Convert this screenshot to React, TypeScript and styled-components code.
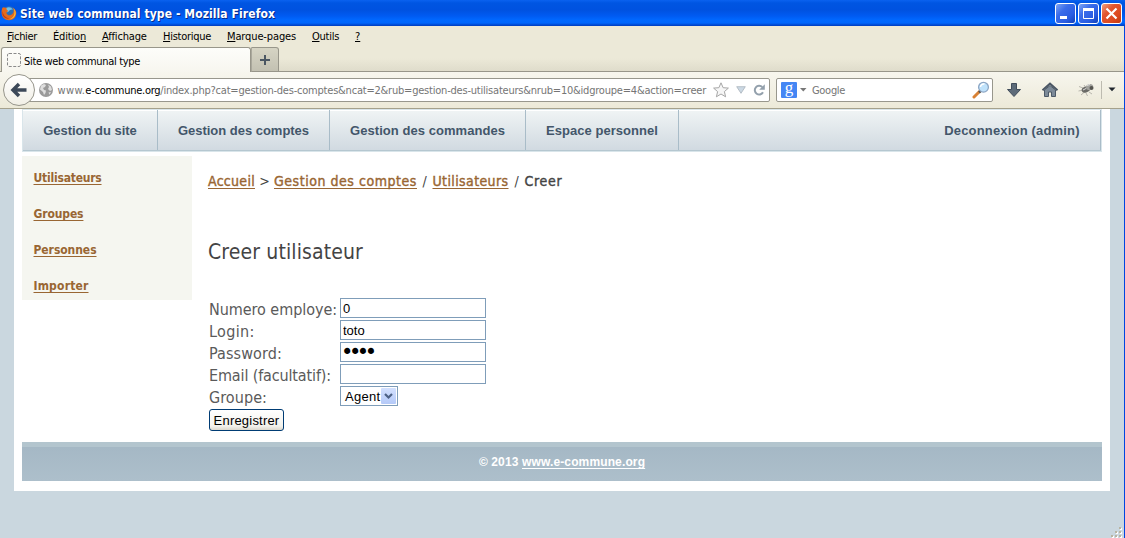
import React from 'react';
import styled, { createGlobalStyle } from 'styled-components';

const ui = '"DejaVu Sans Condensed", "DejaVu Sans", sans-serif';
const arial = '"Liberation Sans", Arial, sans-serif';

const GlobalStyle = createGlobalStyle`
  * { box-sizing: border-box; }
  body { margin: 0; overflow: hidden; font-family: ${ui}; }
  svg { display: block; flex: none; }
`;

const Window = styled.div`
  width: 1125px;
  height: 538px;
  display: flex;
  flex-direction: column;
`;

const TitleBar = styled.header`
  height: 26px;
  flex: none;
  display: flex;
  align-items: center;
  padding: 0 2px 0 1px;
  background: linear-gradient(#0a62f0 0, #0055e2 3px, #0052e0 10px, #005bf2 16px, #0068ff 20px, #0066fc 23px, #0048cf 25px, #003dc0 26px);
`;

const WindowTitle = styled.h1`
  flex: 1;
  margin: 0 0 0 3px;
  padding-top: 1px;
  font: bold 12px/26px ${ui};
  letter-spacing: 0.086px;
  color: #fff;
  text-shadow: 1px 1px 0 #0a2a86;
  white-space: nowrap;
`;

const WindowButtons = styled.div`
  display: flex;
  gap: 2px;
  margin-right: 1px;
`;

const WindowButton = styled.span<{ $close?: boolean }>`
  width: 21px;
  height: 21px;
  border: 1px solid #fff;
  border-radius: 3px;
  background: ${(p) =>
    p.$close
      ? 'linear-gradient(135deg, #f0a080 0%, #e2552f 35%, #dc4a20 70%, #c03a10 100%)'
      : 'linear-gradient(135deg, #7ea4f4 0%, #3a6cea 35%, #2a5de2 70%, #1040b8 100%)'};
`;

const Body = styled.div`
  flex: 1;
  display: flex;
  flex-direction: column;
  border-right: 1px solid #0046e0;
  background: #ece9d8;
  min-height: 0;
`;

const MenuBar = styled.nav`
  display: flex;
  height: 21px;
  flex: none;
  padding-left: 7px;
  font: 11px/21px ${ui};
  color: #000;
`;

const MenuItem = styled.span<{ $width: number; $spacing: number }>`
  width: ${(p) => p.$width}px;
  letter-spacing: ${(p) => p.$spacing}px;
  white-space: nowrap;
  u { text-underline-offset: 1px; }
`;

const TabStrip = styled.div`
  display: flex;
  height: 25px;
  flex: none;
  background: linear-gradient(#ece9d8 45%, #dfdccb 24px);
`;

const StripEdge = styled.div<{ $grow?: boolean }>`
  width: 1px;
  flex: ${(p) => (p.$grow ? '1' : 'none')};
  border-bottom: 1px solid #98968a;
`;

const Tab = styled.div`
  width: 250px;
  display: flex;
  align-items: center;
  gap: 3px;
  border: 1px solid #98968a;
  border-bottom: 0;
  border-radius: 3px 3px 0 0;
  padding-left: 5px;
  background: linear-gradient(#fdfdfa, #f7f6ef);
  font: 11px/14px ${ui};
  letter-spacing: -0.325px;
  color: #000;
`;

const TabLabel = styled.span`
  padding-top: 3px;
`;

const NewTab = styled.div`
  width: 28px;
  display: flex;
  justify-content: center;
  padding-top: 6px;
  border: 1px solid #98968a;
  border-left-color: #aaa89c;
  border-radius: 0 3px 0 0;
  background: linear-gradient(#d6d4c4, #c3c1b2);
`;

const ToolBar = styled.div`
  height: 37px;
  flex: none;
  display: flex;
  align-items: center;
  padding: 0 0 1px 3px;
  border-bottom: 1px solid #a5a18c;
  background: linear-gradient(#f7f6ee, #ece9d8);
`;

const BackButton = styled.span`
  position: relative;
  width: 32px;
  height: 32px;
  margin-right: -16px;
  flex: none;
  display: flex;
  align-items: center;
  justify-content: center;
  border: 1px solid #96958b;
  border-radius: 50%;
  background: linear-gradient(#fff, #f1efe6);
`;

const Field = styled.div`
  height: 24px;
  flex: none;
  display: flex;
  align-items: center;
  border: 1px solid #98978d;
  border-radius: 2px;
  background: #fff;
  font: 11px/20px ${ui};
  color: #757575;
  white-space: nowrap;
`;

const AddressField = styled(Field)`
  width: 751px;
  padding-left: 19px;
`;

const SearchField = styled(Field)`
  width: 217px;
  margin-left: 6px;
  padding: 0 2px 0 4px;
`;

const UrlText = styled.span`
  width: 655px;
  margin-left: 4.500px;
  padding-top: 2px;
  display: flex;
`;

const UrlPart = styled.span<{ $spacing: number; $strong?: boolean }>`
  letter-spacing: ${(p) => p.$spacing}px;
  color: ${(p) => (p.$strong ? '#000' : '#757575')};
`;

const UrlIcons = styled.span`
  display: flex;
  align-items: center;
  gap: 7px;
`;

const Engine = styled.span`
  width: 16px;
  height: 16px;
  border-radius: 1px;
  background: #4486f4;
  color: #fff;
  font: 17px/12px "Liberation Serif", serif;
  text-align: center;
`;

const SearchHint = styled.span`
  flex: 1;
  margin-left: 1px;
  padding-top: 2px;
  letter-spacing: -0.3px;
`;

const Tools = styled.div`
  display: flex;
  align-items: center;
  margin-left: 13px;
`;

const ToolDivider = styled.span`
  width: 1px;
  height: 18px;
  margin: 0 6px 0 6px;
  background: #bdbbb0;
`;

const Viewport = styled.main`
  position: relative;
  flex: 1;
  padding: 0 14px;
  background: #cad7df;
`;

const Page = styled.div`
  width: 1096px;
  height: 382px;
  display: flex;
  flex-direction: column;
  padding: 0 8px 10px;
  background: #fff;
`;

const SiteNav = styled.nav`
  height: 43px;
  flex: none;
  display: flex;
  border: 1px solid #d9e5ea;
  box-shadow: inset 0 -1px 0 #b5c7d0, inset -1px 0 0 #a9bcc8, inset 0 1px 0 #fff;
  background: linear-gradient(#f0f4f5, #d0d9e0);
  font: bold 13px/42px ${arial};
  color: #43566a;
`;

const SiteNavItem = styled.a<{ $width: number; $spacing?: number; $end?: boolean }>`
  width: ${(p) => p.$width}px;
  margin-bottom: 1px;
  margin-left: ${(p) => (p.$end ? 'auto' : '0')};
  border-right: 1px solid ${(p) => (p.$end ? 'transparent' : '#a9bcc8')};
  letter-spacing: ${(p) => p.$spacing ?? 0}px;
  text-align: center;
  white-space: nowrap;
`;

const Columns = styled.div`
  display: flex;
  gap: 16px;
  height: 290px;
  padding-top: 4px;
`;

const SideMenu = styled.aside`
  width: 170px;
  height: 144px;
  display: flex;
  flex-direction: column;
  gap: 18px;
  align-items: flex-start;
  padding: 13px 0 0 11.500px;
  background: #f5f6f0;
`;

const Link = styled.a<{ $spacing: number }>`
  color: #996633;
  text-decoration: underline;
  text-underline-offset: 2px;
  text-decoration-thickness: 1px;
  text-decoration-skip-ink: none;
  letter-spacing: ${(p) => p.$spacing}px;
`;

const SideLink = styled(Link)`
  font: bold 12px/18px ${ui};
`;

const Content = styled.section`
  color: #444;
`;

const Breadcrumb = styled.div`
  display: flex;
  gap: 4px;
  margin-top: 15px;
  font: 14px/20px ${ui};
`;

const Crumb = styled(Link)`
  -webkit-text-stroke: 0.4px #996633;
`;

const Separator = styled.span<{ $width: number }>`
  width: ${(p) => p.$width}px;
  text-align: center;
`;

const CurrentCrumb = styled.span`
  letter-spacing: 0.7px;
  -webkit-text-stroke: 0.4px #444;
`;

const Heading = styled.h2`
  margin: 47px 0 0;
  font: 21px/28px ${ui};
  letter-spacing: 0.127px;
`;

const Form = styled.form`
  margin: 32px 0 0 1px;
  display: flex;
  flex-direction: column;
  align-items: flex-start;
`;

const FormRow = styled.label`
  height: 22px;
  display: flex;
`;

const Label = styled.span<{ $spacing: number }>`
  width: 131px;
  font: 16px/24px ${ui};
  letter-spacing: ${(p) => p.$spacing}px;
  color: #5a5a5a;
  white-space: nowrap;
`;

const Input = styled.input`
  width: 146px;
  height: 20px;
  padding: 0 2px;
  border: 1px solid #7f9db9;
  border-radius: 0;
  background: #fff;
  font: 13px/18px ${arial};
  color: #000;
  outline: 0;
  &[type='password'] {
    padding-left: 0;
    font: 21px/18px "DejaVu Sans", sans-serif;
    letter-spacing: -4.500px;
  }
`;

const Select = styled.span`
  width: 58px;
  height: 20px;
  display: flex;
  justify-content: space-between;
  padding: 1px 1px 1px 4px;
  border: 1px solid #7f9db9;
  background: #fff;
  font: 13px/17px ${arial};
  letter-spacing: 0.3px;
  color: #000;
`;

const SelectArrow = styled.span`
  width: 15px;
  display: flex;
  align-items: center;
  justify-content: center;
  border-radius: 1px;
  background: linear-gradient(#d3e0fe, #b4c9f8);
`;

const Submit = styled.button`
  width: 75px;
  height: 22px;
  margin-top: 1px;
  padding: 0;
  border: 1px solid #003c74;
  border-radius: 3px;
  background: linear-gradient(#fff, #f3f2ec 80%, #dcd8cc);
  font: 13px/19px ${arial};
  letter-spacing: 0.2px;
  color: #000;
`;

const Footer = styled.footer`
  height: 39px;
  flex: none;
  border-top: 5px solid #b3c5ce;
  background: linear-gradient(#a5b8c5, #adbfcb);
  font: bold 12px/30px ${arial};
  color: #fff;
  text-align: center;
  letter-spacing: 0.13px;
`;

const FooterLink = styled.a`
  color: #fff;
  text-decoration: underline;
  text-underline-offset: 2px;
  text-decoration-skip-ink: none;
`;

const Grip = styled.svg`
  position: absolute;
  right: 0;
  bottom: 0;
`;

const FirefoxIcon = () => (
  <svg width="16" height="16" viewBox="0 0 16 16">
    <circle cx="8" cy="7.6" r="6.4" fill="#2c6fb8" />
    <path d="M5 3a5.500 5.500 0 0 1 7 1.500q-3-.5-4 1.500-1 2-3 1z" fill="#6fc0ea" />
    <path d="M1.200 3.200Q2 1.500 3 2.500q1.500-.3 2.600.8Q4.800 4.700 7 5.800 6.800 7 5.300 7.400 6 10.500 9 10.200q2.800-.4 3.600-3.600.3-2.300-.8-4.200Q15.800 5 15.200 9q-1 6-7.200 6.300Q1.300 15 .6 8.500.4 5.300 1.200 3.200z" fill="#e66a1c" />
    <path d="M12.500 3.200q3 3.300 1.800 6.800-1.500 4-5.800 4.300 4.800-1.800 5-6.300.1-2.600-1-4.800z" fill="#f9c53a" />
    <path d="M1.500 6q.8 6 6.500 7.600Q3 14 1.500 9.500z" fill="#b93a17" />
  </svg>
);

const sites = [
  { text: 'Gestion du site', width: 135, spacing: -0.02 },
  { text: 'Gestion des comptes', width: 172, spacing: -0.02 },
  { text: 'Gestion des commandes', width: 196, spacing: 0.05 },
  { text: 'Espace personnel', width: 153, spacing: 0.05 },
];

const sideLinks = [
  ['Utilisateurs', -0.22],
  ['Groupes', -0.12],
  ['Personnes', -0.06],
  ['Importer', 0.18],
] as const;

export default function App() {
  return (
    <Window>
      <GlobalStyle />
      <TitleBar>
        <FirefoxIcon />
        <WindowTitle>Site web communal type - Mozilla Firefox</WindowTitle>
        <WindowButtons>
          <WindowButton>
            <svg width="19" height="19"><rect x="4" y="12" width="7" height="3" fill="#fff" /></svg>
          </WindowButton>
          <WindowButton>
            <svg width="19" height="19">
              <path d="M4.500 5v9.500h10V5" fill="none" stroke="#fff" />
              <path d="M4 4h11v3H4z" fill="#fff" />
            </svg>
          </WindowButton>
          <WindowButton $close>
            <svg width="19" height="19"><path d="M4.500 4.500l10 10m0-10l-10 10" stroke="#fff" strokeWidth="2.200" /></svg>
          </WindowButton>
        </WindowButtons>
      </TitleBar>
      <Body>
        <MenuBar>
          <MenuItem $width={46} $spacing={-0.32}><u>F</u>ichier</MenuItem>
          <MenuItem $width={49} $spacing={-0.18}>Éditio<u>n</u></MenuItem>
          <MenuItem $width={61} $spacing={-0.17}><u>A</u>ffichage</MenuItem>
          <MenuItem $width={64} $spacing={-0.27}><u>H</u>istorique</MenuItem>
          <MenuItem $width={85} $spacing={-0.13}><u>M</u>arque-pages</MenuItem>
          <MenuItem $width={43} $spacing={-0.26}><u>O</u>utils</MenuItem>
          <MenuItem $width={10} $spacing={0}><u>?</u></MenuItem>
        </MenuBar>
        <TabStrip>
          <StripEdge />
          <Tab>
            <svg width="14" height="14">
              <rect x=".5" y=".5" width="13" height="13" rx="1.500" fill="none" stroke="#8a8a8a" strokeDasharray="3 1.500" />
            </svg>
            <TabLabel>Site web communal type</TabLabel>
          </Tab>
          <NewTab>
            <svg width="12" height="12"><path d="M6 1v10M1 6h10" stroke="#4b5763" strokeWidth="2" /></svg>
          </NewTab>
          <StripEdge $grow />
        </TabStrip>
        <ToolBar>
          <BackButton>
            <svg width="18" height="16" viewBox="0 0 18 16">
              <path d="M9 2L3 8l6 6M3.500 8h13" fill="none" stroke="#3c4858" strokeWidth="3.500" />
            </svg>
          </BackButton>
          <AddressField>
            <svg width="14" height="14" viewBox="0 0 14 14">
              <circle cx="7" cy="7" r="7" fill="#9a9a9a" />
              <path d="M2 2.500l3-1.500 2 1-1 2-2 1 1 2 2 .5-.5 2.500L5 12 4 9 1 6.500zM9 1.500l3 2 1 3.500-2 1-2-2 1-2zM9.500 9.500l2.500-.5-1.500 2.800z" fill="#dedede" />
            </svg>
            <UrlText>
              <UrlPart $spacing={0.35}>www.</UrlPart>
              <UrlPart $spacing={-0.264} $strong>e-commune.org</UrlPart>
              <UrlPart $spacing={-0.213}>/index.php?cat=gestion-des-comptes&amp;ncat=2&amp;rub=gestion-des-utilisateurs&amp;nrub=10&amp;idgroupe=4&amp;action=creer</UrlPart>
            </UrlText>
            <UrlIcons>
              <svg width="16" height="16" viewBox="0 0 16 16">
                <path d="M8 .8l2.100 4.900 5.300.4-4 3.500 1.200 5.200L8 12l-4.600 2.800 1.200-5.200-4-3.500 5.300-.4z" fill="#f6f6f6" stroke="#a6a6a6" />
              </svg>
              <svg width="10" height="8" viewBox="0 0 10 8">
                <path d="M.7.7h8.600L5 7.300z" fill="#ccd9e4" stroke="#a9b3bb" strokeWidth=".8" />
              </svg>
              <svg width="12" height="12" viewBox="1.500 0 12 12">
                <path d="M9.300 3A4.400 4.400 0 1 0 10 8.300" fill="none" stroke="#93a0ac" strokeWidth="2" transform="translate(1.500 0)" />
                <path d="M13.300.3v5.500H7.700z" fill="#93a0ac" />
              </svg>
            </UrlIcons>
          </AddressField>
          <SearchField>
            <Engine>g</Engine>
            <svg width="14" height="6" viewBox="0 0 14 6"><path d="M3 1h6.500L6.300 4.500z" fill="#777" /></svg>
            <SearchHint>Google</SearchHint>
            <svg width="18" height="18" viewBox="0 0 18 18">
              <path d="M8 10L2 16" stroke="#d98235" strokeWidth="3" strokeLinecap="round" />
              <path d="M9 9.500L7 11.500" stroke="#555" strokeWidth="2.500" />
              <circle cx="11.500" cy="6.200" r="4.900" fill="#bfe2fb" stroke="#8da6c4" strokeWidth="1.300" />
              <path d="M8.500 6a3.200 3.200 0 0 1 4-3" stroke="#fff" strokeWidth="1.500" fill="none" />
            </svg>
          </SearchField>
          <Tools>
            <svg width="16" height="16" viewBox="0 0 16 16">
              <path d="M5.500 1.500h5v6h4L8 14.500 1.500 7.500h4z" fill="#5d6b79" stroke="#414d5b" />
            </svg>
            <svg width="56" height="16" viewBox="-1 0 56 16">
              <path d="M21.500 8v6.500h4V10h3v4.500h4V8L27 3.500z" fill="#7c8a98" stroke="#4c5967" />
              <path d="M19.500 8.300L27 1.600l7.500 6.700" fill="none" stroke="#4a5664" strokeWidth="2" />
            </svg>
            <svg width="17" height="14" viewBox="0 0 17 14">
              <path d="M1 3.500l4 1.500M.5 8l5-1M3 12l3.500-3M8 10l1.500 3M11 9l3 2M6 2l2 3" stroke="#b8b6ad" />
              <ellipse cx="8" cy="6.500" rx="4.500" ry="2.800" transform="rotate(-20 8 6.500)" fill="#6a6a66" />
              <ellipse cx="11.500" cy="4" rx="3.800" ry="2.800" transform="rotate(-20 11.500 4)" fill="#a3a39e" />
              <circle cx="13.500" cy="5" r="2" fill="#555550" />
              <path d="M9 2.500l3-1M5 7l3-1.500" stroke="#ddd" />
            </svg>
            <ToolDivider />
            <svg width="9" height="5" viewBox="0 0 9 5"><path d="M.5.5h7L4 4.300z" fill="#20262e" /></svg>
          </Tools>
        </ToolBar>
        <Viewport>
          <Page>
            <SiteNav>
              {sites.map((s) => (
                <SiteNavItem key={s.text} $width={s.width} $spacing={s.spacing}>{s.text}</SiteNavItem>
              ))}
              <SiteNavItem $width={177} $spacing={0.175} $end>Deconnexion (admin)</SiteNavItem>
            </SiteNav>
            <Columns>
              <SideMenu>
                {sideLinks.map(([text, spacing]) => (
                  <SideLink key={text} $spacing={spacing}>{text}</SideLink>
                ))}
              </SideMenu>
              <Content>
                <Breadcrumb>
                  <Crumb $spacing={0.29}>Accueil</Crumb>
                  <Separator $width={11}>&gt;</Separator>
                  <Crumb $spacing={0.544}>Gestion des comptes</Crumb>
                  <Separator $width={7.5}>/</Separator>
                  <Crumb $spacing={0.39}>Utilisateurs</Crumb>
                  <Separator $width={8}>/</Separator>
                  <CurrentCrumb>Creer</CurrentCrumb>
                </Breadcrumb>
                <Heading>Creer utilisateur</Heading>
                <Form>
                  <FormRow><Label $spacing={-0.05}>Numero employe:</Label><Input defaultValue="0" /></FormRow>
                  <FormRow><Label $spacing={0.35}>Login:</Label><Input defaultValue="toto" /></FormRow>
                  <FormRow><Label $spacing={0.11}>Password:</Label><Input type="password" defaultValue="toto" /></FormRow>
                  <FormRow><Label $spacing={-0.14}>Email (facultatif):</Label><Input /></FormRow>
                  <FormRow>
                    <Label $spacing={0.07}>Groupe:</Label>
                    <Select>
                      Agent
                      <SelectArrow>
                        <svg width="9" height="7" viewBox="0 0 9 7"><path d="M1 1l3.500 3.500L8 1" fill="none" stroke="#4d6185" strokeWidth="2.200" /></svg>
                      </SelectArrow>
                    </Select>
                  </FormRow>
                  <Submit type="button">Enregistrer</Submit>
                </Form>
              </Content>
            </Columns>
            <Footer>© 2013 <FooterLink>www.e-commune.org</FooterLink></Footer>
          </Page>
          <Grip width="13" height="11">
            {[[9, 1], [5, 5], [9, 5], [1, 9], [5, 9], [9, 9]].map(([x, y]) => (
              <g key={`${x}-${y}`}>
                <rect x={x} y={y} width="2" height="2" fill="#fff" />
                <rect x={x - 1} y={y - 1} width="2" height="2" fill="#b8b4a2" />
              </g>
            ))}
          </Grip>
        </Viewport>
      </Body>
    </Window>
  );
}
